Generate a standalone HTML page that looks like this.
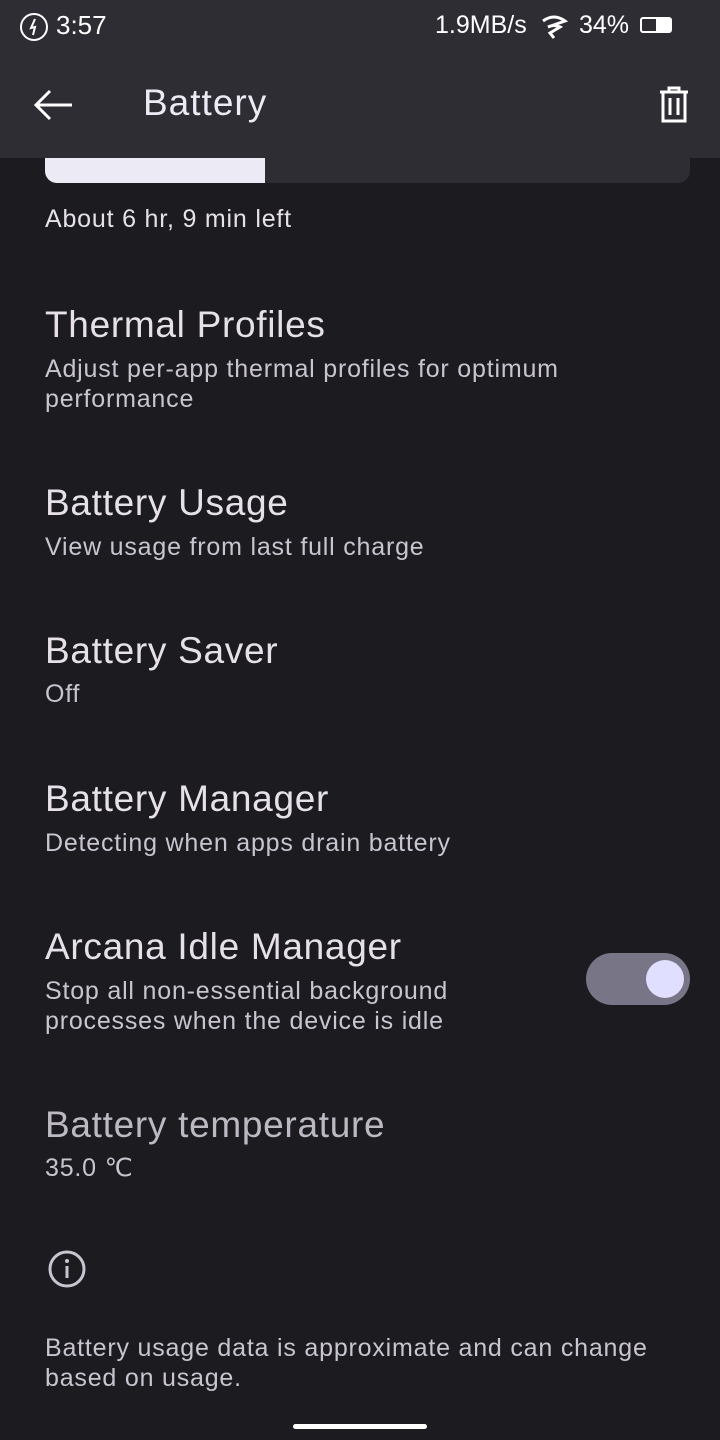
<!DOCTYPE html>
<html><head><style>
body{margin:0;width:720px;height:1440px;background:#1c1b20;font-family:"Liberation Sans",sans-serif;color:#e6e1e9;position:relative;overflow:hidden}
.a{position:absolute;white-space:nowrap}
.t{font-size:37px;letter-spacing:0.7px;color:#e6e1e9}
.s{font-size:25px;letter-spacing:0.8px;color:#c9c5d0;line-height:30px}
</style></head><body>
<div class="a" style="left:0;top:0;width:720px;height:158px;background:#2e2d33"></div>
<svg class="a" style="left:18px;top:11px" width="32" height="32" viewBox="0 0 32 32"><circle cx="16" cy="16" r="13" fill="none" stroke="#fff" stroke-width="2"/><path d="M17 8 L13 17 L17 16 L15 24" fill="none" stroke="#fff" stroke-width="2"/></svg>
<div class="a" style="left:56px;top:10px;font-size:26px;color:#fff">3:57</div>
<div class="a" style="left:435px;top:11px;font-size:25px;color:#fff">1.9MB/s</div>
<svg class="a" style="left:540px;top:14px" width="28" height="26" viewBox="0 0 28 26"><path d="M3 7 Q14 -1 25 7 L8 13 Q14 10 20 13 L10 19 L14 24" fill="none" stroke="#fff" stroke-width="3"/></svg>
<div class="a" style="left:579px;top:11px;font-size:25px;color:#fff">34%</div>
<div class="a" style="left:640px;top:17px;width:32px;height:16px;border:2px solid #fff;border-radius:3px;box-sizing:border-box"></div>
<div class="a" style="left:656px;top:19px;width:14px;height:12px;background:#fff"></div>
<svg class="a" style="left:32px;top:86px" width="42" height="38" viewBox="0 0 42 38"><path d="M40 19 H4 M18 5 L4 19 L18 33" fill="none" stroke="#fff" stroke-width="3"/></svg>
<div class="a" style="left:143px;top:82px;font-size:37px;letter-spacing:1px;color:#ecebf5">Battery</div>
<svg class="a" style="left:656px;top:86px" width="36" height="38" viewBox="0 0 36 38"><path d="M4 6 H32 M13 6 V2 H23 V6 M7 6 V35 H29 V6 M14 12 V29 M22 12 V29" fill="none" stroke="#fff" stroke-width="3"/></svg>
<div class="a" style="left:45px;top:158px;width:645px;height:25px;background:#2e2d33;border-radius:0 0 12px 12px"></div>
<div class="a" style="left:45px;top:158px;width:220px;height:25px;background:#ecebf5;border-radius:0 0 0 12px"></div>
<div class="a" style="left:45px;top:205px;font-size:25px;letter-spacing:0.8px;color:#e6e1e9">About 6 hr, 9 min left</div>
<div class="a t" style="left:45px;top:304px">Thermal Profiles</div>
<div class="a s" style="left:45px;top:354px">Adjust per-app thermal profiles for optimum<br>performance</div>
<div class="a t" style="left:45px;top:482px">Battery Usage</div>
<div class="a s" style="left:45px;top:532px">View usage from last full charge</div>
<div class="a t" style="left:45px;top:630px">Battery Saver</div>
<div class="a s" style="left:45px;top:679px">Off</div>
<div class="a t" style="left:45px;top:778px">Battery Manager</div>
<div class="a s" style="left:45px;top:828px">Detecting when apps drain battery</div>
<div class="a t" style="left:45px;top:926px">Arcana Idle Manager</div>
<div class="a s" style="left:45px;top:976px">Stop all non-essential background<br>processes when the device is idle</div>
<div class="a" style="left:586px;top:953px;width:104px;height:52px;border-radius:26px;background:#787586"></div>
<div class="a" style="left:646px;top:960px;width:38px;height:38px;border-radius:50%;background:#e0dfff"></div>
<div class="a t" style="left:45px;top:1104px;color:#bdb9c3">Battery temperature</div>
<div class="a s" style="left:45px;top:1153px">35.0 ℃</div>
<svg class="a" style="left:47px;top:1249px" width="40" height="40" viewBox="0 0 40 40"><circle cx="20" cy="20" r="17" fill="none" stroke="#c9c5d0" stroke-width="3"/><path d="M20 17 V29" stroke="#c9c5d0" stroke-width="3"/><circle cx="20" cy="12" r="2" fill="#c9c5d0"/></svg>
<div class="a s" style="left:45px;top:1333px">Battery usage data is approximate and can change<br>based on usage.</div>
<div class="a" style="left:293px;top:1424px;width:134px;height:5px;border-radius:3px;background:#fff"></div>
</body></html>
